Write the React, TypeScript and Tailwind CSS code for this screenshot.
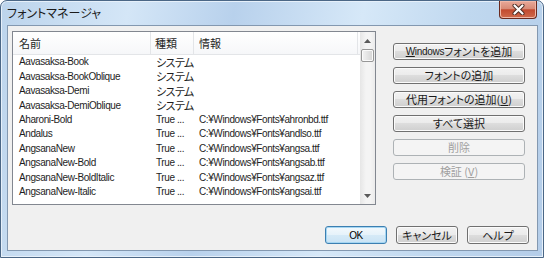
import React from "react";

const lat = "font-['Liberation_Sans','Noto_Sans_CJK_JP',sans-serif] text-[10px] tracking-[-0.4px]";
const jp = "font-['Noto_Sans_CJK_JP',sans-serif] text-[11px] [font-feature-settings:'palt']";

interface FontRow {
  name: string;
  kind: string;
  info: string;
}

const rows: FontRow[] = [
  { name: "Aavasaksa-Book", kind: "システム", info: "" },
  { name: "Aavasaksa-BookOblique", kind: "システム", info: "" },
  { name: "Aavasaksa-Demi", kind: "システム", info: "" },
  { name: "Aavasaksa-DemiOblique", kind: "システム", info: "" },
  { name: "Aharoni-Bold", kind: "True ...", info: "C:¥Windows¥Fonts¥ahronbd.ttf" },
  { name: "Andalus", kind: "True ...", info: "C:¥Windows¥Fonts¥andlso.ttf" },
  { name: "AngsanaNew", kind: "True ...", info: "C:¥Windows¥Fonts¥angsa.ttf" },
  { name: "AngsanaNew-Bold", kind: "True ...", info: "C:¥Windows¥Fonts¥angsab.ttf" },
  { name: "AngsanaNew-BoldItalic", kind: "True ...", info: "C:¥Windows¥Fonts¥angsaz.ttf" },
  { name: "AngsanaNew-Italic", kind: "True ...", info: "C:¥Windows¥Fonts¥angsai.ttf" },
];

const btn =
  "flex items-center justify-center whitespace-nowrap leading-none rounded-[3px] border border-[#707070] bg-[linear-gradient(#f2f2f2_0%,#ebebeb_49%,#dddddd_50%,#cfcfcf_100%)] shadow-[inset_0_0_0_1px_#fbfbfb] text-[#1a1a1a]";
const btnOff =
  "flex items-center justify-center whitespace-nowrap leading-none rounded-[3px] border border-[#adb2b5] bg-[#f4f4f4] text-[#a0a0a0]";

const Arrow = ({ down }: { down?: boolean }) => (
  <svg width="7" height="4" viewBox="0 0 7 4" className={down ? "rotate-180" : ""}>
    <path d="M0 4 3.5 0 7 4z" fill="#5a5a5a" />
  </svg>
);

const App = () => {
  return (
    <div className="h-[258px] w-[544px] bg-white">
      <div className="relative flex h-[258px] w-[544px] flex-col rounded-t-[7px] border border-[#4b6786] bg-[linear-gradient(100deg,#bcd4ec_0%,#d4e6f7_22%,#b8d1ec_40%,#d6e8f8_62%,#c0d8ef_80%,#b4cde9_100%)] shadow-[inset_0_0_0_1px_#e6f0fa]">
        {/* title bar */}
        <div className="flex h-[24px] shrink-0 items-center pl-[6px]">
          <span className={`${jp} text-[12px] text-[#1b1b1b]`}>フォントマネージャ</span>
        </div>
        <div className="absolute right-[6px] top-0 flex h-[18px] w-[38px] items-center justify-center rounded-b-[4px] border border-t-0 border-[#6a2a1f] bg-[linear-gradient(#e9a999_0%,#d88b77_45%,#c24a2f_52%,#cf6a4c_100%)] shadow-[inset_0_0_0_1px_#f0b8a8]">
          <svg width="13" height="11" viewBox="0 0 13 11">
            <path d="M2.5 1.5 10.5 9.5M10.5 1.5 2.5 9.5" stroke="#4a2a22" strokeWidth="4" strokeLinecap="round" />
            <path d="M2.5 1.5 10.5 9.5M10.5 1.5 2.5 9.5" stroke="#ffffff" strokeWidth="2.2" strokeLinecap="round" />
          </svg>
        </div>

        {/* client */}
        <div className="mb-[6px] ml-[6px] mr-[5px] flex flex-1 flex-col border border-[#8398b0] bg-[#f0f0f0] pl-[4px] pt-[5px]">
          <div className="flex">
            {/* list */}
            <div className="flex h-[174px] w-[364px] border border-[#828790] bg-white">
              <div className="w-[347px] overflow-hidden">
                <div className={`flex h-[23px] border-b border-[#e3e5e8] bg-[linear-gradient(#ffffff,#f6f7f9)] text-[#1e1e1e] ${jp}`}>
                  <div className="flex w-[138px] items-center border-r border-[#e3e5e8] pl-[6px]">名前</div>
                  <div className="flex w-[43px] items-center border-r border-[#e3e5e8] pl-[4px]">種類</div>
                  <div className="flex w-[164px] items-center border-r border-[#e3e5e8] pl-[5px]">情報</div>
                </div>
                {rows.map((r) => (
                  <div key={r.name} className="flex h-[14.45px] items-center whitespace-nowrap leading-none text-[#1e1e1e]">
                    <div className={`w-[138px] shrink-0 overflow-hidden pl-[6px] ${lat}`}>{r.name}</div>
                    {r.kind === "システム" ? (
                      <div className={`w-[43px] shrink-0 pl-[5px] ${jp} text-[10px] tracking-[-0.6px]`}>{r.kind}</div>
                    ) : (
                      <div className={`w-[43px] shrink-0 overflow-hidden pl-[5px] ${lat}`}>{r.kind}</div>
                    )}
                    <div className={`flex-1 pl-[5px] ${lat}`}>{r.info}</div>
                  </div>
                ))}
              </div>
              {/* scrollbar */}
              <div className="flex w-[15px] flex-col bg-[linear-gradient(to_right,#e6e6e6,#f4f4f4_40%,#f4f4f4_70%,#ebebeb)]">
                <div className="flex h-[17px] items-center justify-center">
                  <Arrow />
                </div>
                <div className="mx-[1px] h-[13px] rounded-[2px] border border-[#979797] bg-[linear-gradient(to_right,#f3f3f3,#e4e4e4_50%,#d4d4d4)] shadow-[inset_0_0_0_1px_#fafafa]" />
                <div className="flex-1" />
                <div className="flex h-[17px] items-center justify-center">
                  <Arrow down />
                </div>
              </div>
            </div>

            {/* side buttons */}
            <div className="ml-[17px] flex w-[132px] flex-col gap-[7px] pt-[12px]">
              <div className={`h-[17px] ${btn} ${jp} text-[10.5px]`}>
                <span className="font-['Liberation_Sans',sans-serif] text-[10px] tracking-[-0.3px]">
                  <span className="underline">W</span>indows
                </span>
                フォントを追加
              </div>
              <div className={`h-[17px] ${btn} ${jp} text-[10.5px]`}>フォントの追加</div>
              <div className={`h-[17px] ${btn} ${jp} text-[10.5px]`}>
                代用フォントの追加(<span className="underline">U</span>)
              </div>
              <div className={`h-[17px] ${btn} ${jp} text-[10.5px]`}>すべて選択</div>
              <div className={`h-[17px] ${btnOff} ${jp} text-[10.5px]`}>削除</div>
              <div className={`h-[17px] ${btnOff} ${jp} text-[10.5px]`}>
                検証 (<span className="underline">V</span>)
              </div>
            </div>
          </div>

          {/* bottom buttons */}
          <div className="mt-[21px] flex justify-end gap-[9px] pr-[8px]">
            <div className={`flex h-[18px] w-[62px] items-center justify-center rounded-[3px] border border-[#3c7fb1] bg-[linear-gradient(#f3f9fd_0%,#e6f2fa_49%,#d6eaf7_50%,#c9e3f5_100%)] shadow-[inset_0_0_0_1px_#a5d6f2] ${lat} text-[10.5px]`}>
              OK
            </div>
            <div className={`h-[18px] w-[62px] ${btn} ${jp} text-[10.5px]`}>キャンセル</div>
            <div className={`h-[18px] w-[62px] ${btn} ${jp} text-[10.5px]`}>ヘルプ</div>
          </div>
        </div>
      </div>
    </div>
  );
};

export default App;
